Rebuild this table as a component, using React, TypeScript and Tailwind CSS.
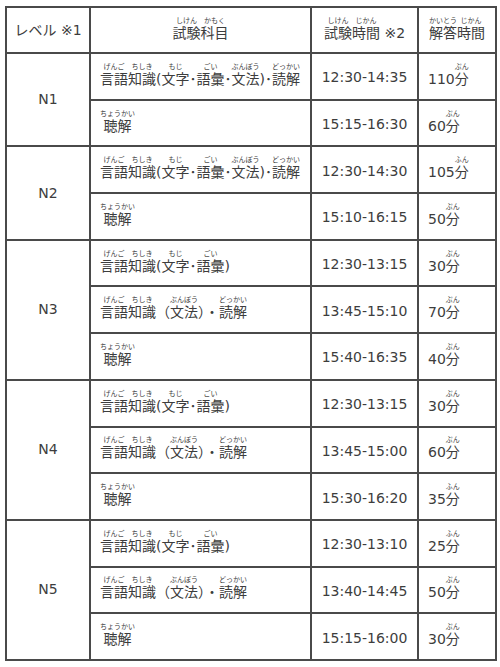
import React from "react";

type Subject = "full" | "moji" | "bunpo" | "chokai";

type Item = { subject: Subject; time: string; min: string; fun: string };

const levels: { level: string; items: Item[] }[] = [
  {
    level: "N1",
    items: [
      { subject: "full", time: "12:30-14:35", min: "110", fun: "ぷん" },
      { subject: "chokai", time: "15:15-16:30", min: "60", fun: "ぷん" },
    ],
  },
  {
    level: "N2",
    items: [
      { subject: "full", time: "12:30-14:30", min: "105", fun: "ふん" },
      { subject: "chokai", time: "15:10-16:15", min: "50", fun: "ぷん" },
    ],
  },
  {
    level: "N3",
    items: [
      { subject: "moji", time: "12:30-13:15", min: "30", fun: "ぷん" },
      { subject: "bunpo", time: "13:45-15:10", min: "70", fun: "ぷん" },
      { subject: "chokai", time: "15:40-16:35", min: "40", fun: "ぷん" },
    ],
  },
  {
    level: "N4",
    items: [
      { subject: "moji", time: "12:30-13:15", min: "30", fun: "ぷん" },
      { subject: "bunpo", time: "13:45-15:00", min: "60", fun: "ぷん" },
      { subject: "chokai", time: "15:30-16:20", min: "35", fun: "ふん" },
    ],
  },
  {
    level: "N5",
    items: [
      { subject: "moji", time: "12:30-13:10", min: "25", fun: "ふん" },
      { subject: "bunpo", time: "13:40-14:45", min: "50", fun: "ぷん" },
      { subject: "chokai", time: "15:15-16:00", min: "30", fun: "ぷん" },
    ],
  },
];

// furigana: reading on top, base text below, baseline follows the base
function R({ base, rt }: { base: string; rt: string }) {
  return (
    <span className="inline-block whitespace-nowrap text-center align-baseline">
      <span className="block text-[7px] leading-[8px]">{rt}</span>
      <span className="block leading-[16px]">{base}</span>
    </span>
  );
}

function SubjectText({ subject }: { subject: Subject }) {
  if (subject === "chokai") {
    return <R base="聴解" rt="ちょうかい" />;
  }
  return (
    <>
      <R base="言語" rt="げんご" />
      <R base="知識" rt="ちしき" />
      {subject === "bunpo" ? (
        <>
          （<R base="文法" rt="ぶんぽう" />）・<R base="読解" rt="どっかい" />
        </>
      ) : (
        <>
          (<R base="文字" rt="もじ" />･<R base="語彙" rt="ごい" />
          {subject === "full" ? (
            <>
              ･<R base="文法" rt="ぶんぽう" />)･<R base="読解" rt="どっかい" />
            </>
          ) : (
            ")"
          )}
        </>
      )}
    </>
  );
}

const cell = "border-2 border-[#4a4a4a] align-middle";

export default function App() {
  return (
    <div
      className="min-h-[667px] bg-white pl-[5px] pt-[6px] text-[14px] text-[#3d3d3d]"
      style={{ fontFamily: '"DejaVu Sans", "Noto Sans CJK JP", sans-serif' }}
    >
      <table className="w-[490px] table-fixed border-collapse">
        <colgroup>
          <col className="w-[84px]" />
          <col className="w-[221px]" />
          <col className="w-[107px]" />
          <col className="w-[78px]" />
        </colgroup>
        <thead>
          <tr className="h-[46px]">
            <th className={`${cell} text-center font-normal`}>レベル ※1</th>
            <th className={`${cell} text-center font-normal`}>
              <R base="試験" rt="しけん" />
              <R base="科目" rt="かもく" />
            </th>
            <th className={`${cell} text-center font-normal`}>
              <R base="試験" rt="しけん" />
              <R base="時間" rt="じかん" /> ※2
            </th>
            <th className={`${cell} text-center font-normal`}>
              <R base="解答" rt="かいとう" />
              <R base="時間" rt="じかん" />
            </th>
          </tr>
        </thead>
        <tbody>
          {levels.map((lv) =>
            lv.items.map((it, i) => (
              <tr key={lv.level + i} className="h-[46.7px]">
                {i === 0 && (
                  <td rowSpan={lv.items.length} className={`${cell} text-center`}>
                    {lv.level}
                  </td>
                )}
                <td className={`${cell} whitespace-nowrap pl-[9px]`}>
                  <SubjectText subject={it.subject} />
                </td>
                <td className={`${cell} pt-[3px] text-center`}>{it.time}</td>
                <td className={`${cell} pl-[9px]`}>
                  {it.min}
                  <R base="分" rt={it.fun} />
                </td>
              </tr>
            ))
          )}
        </tbody>
      </table>
    </div>
  );
}
